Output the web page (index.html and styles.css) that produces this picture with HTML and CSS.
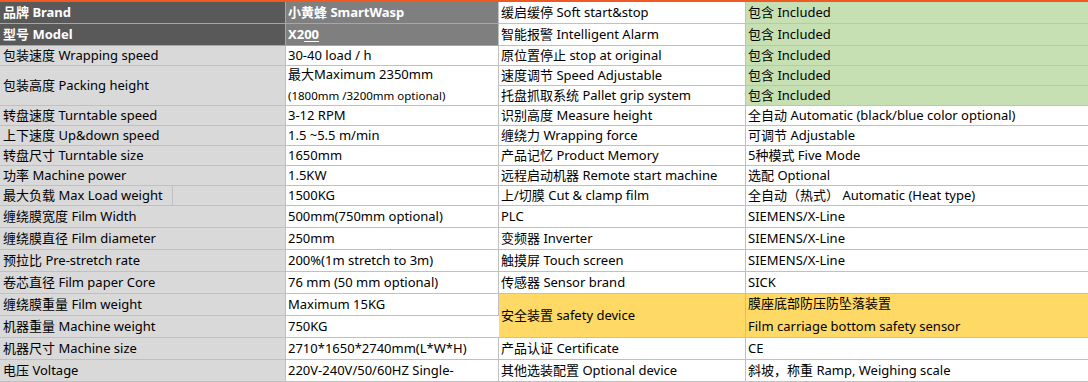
FILE: index.html
```html
<!DOCTYPE html>
<html lang="zh">
<head>
<meta charset="utf-8">
<title>SmartWasp X200</title>
<link rel="stylesheet" href="styles.css">
</head>
<body>
<table class="spec">
  <colgroup>
    <col class="c1"><col class="c2"><col class="c3"><col class="c4">
  </colgroup>
  <tbody>
    <tr class="h22">
      <td class="hd1">品牌 Brand</td>
      <td class="hd2">小黄蜂 SmartWasp</td>
      <td>缓启缓停 Soft start&amp;stop</td>
      <td class="green">包含 Included</td>
    </tr>
    <tr class="h22">
      <td class="hd1">型号 Model</td>
      <td class="hd2">X2<span class="ul">00</span></td>
      <td>智能报警 Intelligent Alarm</td>
      <td class="green">包含 Included</td>
    </tr>
    <tr class="h20">
      <td class="lab">包装速度 Wrapping speed</td>
      <td>30-40 load / h</td>
      <td>原位置停止 stop at original</td>
      <td class="green">包含 Included</td>
    </tr>
    <tr class="h20">
      <td class="lab" rowspan="2">包装高度 Packing height</td>
      <td rowspan="2" class="two">
        <div class="line-a20">最大Maximum 2350mm</div>
        <div class="line-b20 small">(1800mm /3200mm optional)</div>
      </td>
      <td>速度调节 Speed Adjustable</td>
      <td class="green">包含 Included</td>
    </tr>
    <tr class="h20">
      <td>托盘抓取系统 Pallet grip system</td>
      <td class="green">包含 Included</td>
    </tr>
    <tr class="h20">
      <td class="lab">转盘速度 Turntable speed</td>
      <td>3-12 RPM</td>
      <td>识别高度 Measure height</td>
      <td>全自动 Automatic (black/blue color optional)</td>
    </tr>
    <tr class="h20">
      <td class="lab">上下速度 Up&amp;down speed</td>
      <td>1.5 ~5.5 m/min</td>
      <td>缠绕力 Wrapping force</td>
      <td>可调节 Adjustable</td>
    </tr>
    <tr class="h20">
      <td class="lab">转盘尺寸 Turntable size</td>
      <td>1650mm</td>
      <td>产品记忆 Product Memory</td>
      <td>5种模式 Five Mode</td>
    </tr>
    <tr class="h20">
      <td class="lab">功率 Machine power</td>
      <td>1.5KW</td>
      <td>远程启动机器 Remote start machine</td>
      <td>选配 Optional</td>
    </tr>
    <tr class="h20">
      <td class="lab split-cell"><div class="split"><span class="split-a">最大负载 Max Load weight</span><span class="split-b"></span></div></td>
      <td>1500KG</td>
      <td>上/切膜 Cut &amp; clamp film</td>
      <td>全自动（热式） Automatic (Heat type)</td>
    </tr>
    <tr class="h22">
      <td class="lab">缠绕膜宽度 Film Width</td>
      <td>500mm(750mm optional)</td>
      <td>PLC</td>
      <td>SIEMENS/X-Line</td>
    </tr>
    <tr class="h22">
      <td class="lab">缠绕膜直径 Film diameter</td>
      <td>250mm</td>
      <td>变频器 Inverter</td>
      <td>SIEMENS/X-Line</td>
    </tr>
    <tr class="h22">
      <td class="lab">预拉比 Pre-stretch rate</td>
      <td>200%(1m stretch to 3m)</td>
      <td>触摸屏 Touch screen</td>
      <td>SIEMENS/X-Line</td>
    </tr>
    <tr class="h22">
      <td class="lab">卷芯直径 Film paper Core</td>
      <td>76 mm (50 mm optional)</td>
      <td>传感器 Sensor brand</td>
      <td>SICK</td>
    </tr>
    <tr class="h22">
      <td class="lab">缠绕膜重量 Film weight</td>
      <td>Maximum 15KG</td>
      <td class="yellow" rowspan="2">安全装置 safety device</td>
      <td class="yellow two" rowspan="2">
        <div class="line-a22">膜座底部防压防坠落装置</div>
        <div class="line-b22">Film carriage bottom safety sensor</div>
      </td>
    </tr>
    <tr class="h22">
      <td class="lab">机器重量 Machine weight</td>
      <td>750KG</td>
    </tr>
    <tr class="h22">
      <td class="lab">机器尺寸 Machine size</td>
      <td>2710*1650*2740mm(L*W*H)</td>
      <td>产品认证 Certificate</td>
      <td>CE</td>
    </tr>
    <tr class="h22">
      <td class="lab">电压 Voltage</td>
      <td>220V-240V/50/60HZ Single-</td>
      <td>其他选装配置 Optional device</td>
      <td>斜坡，称重 Ramp, Weighing scale</td>
    </tr>
  </tbody>
</table>
</body>
</html>
```

FILE: styles.css
```css
html, body {
  margin: 0;
  padding: 0;
  background: #ffffff;
}

body {
  font-family: "Noto Sans", "Noto Sans CJK SC", sans-serif;
  font-size: 13px;
  color: #000000;
}

.spec {
  border-collapse: separate;
  border-spacing: 0;
  table-layout: fixed;
  width: 1088px;
  border-top: 2px solid #f05a22;
}

.c1 { width: 286px; }
.c2 { width: 213px; }
.c3 { width: 247px; }
.c4 { width: 342px; }

.spec td {
  box-sizing: border-box;
  border-right: 1px solid #c0c0c0;
  border-bottom: 1px solid #c0c0c0;
  padding: 0 0 2px 2px;
  vertical-align: middle;
  white-space: nowrap;
  overflow: hidden;
  line-height: 16px;
}

.spec td:last-child { border-right: none; }

.h22 { height: 22px; }
.h20 { height: 20px; }

.spec td.hd1 {
  background: #595959;
  color: #ffffff;
  font-weight: bold;
  padding-left: 3px;
  border-bottom-color: #a6a6a6;
  border-right-color: #a6a6a6;
}

.spec td.hd2 {
  background: #7f7f7f;
  color: #ffffff;
  font-weight: bold;
  border-bottom-color: #a6a6a6;
}

.ul {
  text-decoration: underline;
  text-underline-offset: 2px;
}

.spec td.lab {
  background: #d9d9d9;
  padding-left: 3px;
}

.spec td.green { background: #c6e0b4; }
.spec td.yellow { background: #ffd966; }

.spec td.two { padding-top: 0; padding-bottom: 0; }

.line-a20 {
  height: 20px;
  line-height: 17px;
}

.line-b20 {
  height: 19px;
  line-height: 19px;
}

.line-a22 {
  height: 22px;
  line-height: 19px;
}

.line-b22 {
  height: 21px;
  line-height: 20px;
}

.small { font-size: 11.5px; }

.spec td.split-cell { padding: 0; }

.split {
  display: flex;
  height: 19px;
}

.split-a {
  box-sizing: border-box;
  width: 173px;
  padding-left: 3px;
  line-height: 18px;
  border-right: 1px solid #c0c0c0;
}

.split-b { flex: 1; }
```
